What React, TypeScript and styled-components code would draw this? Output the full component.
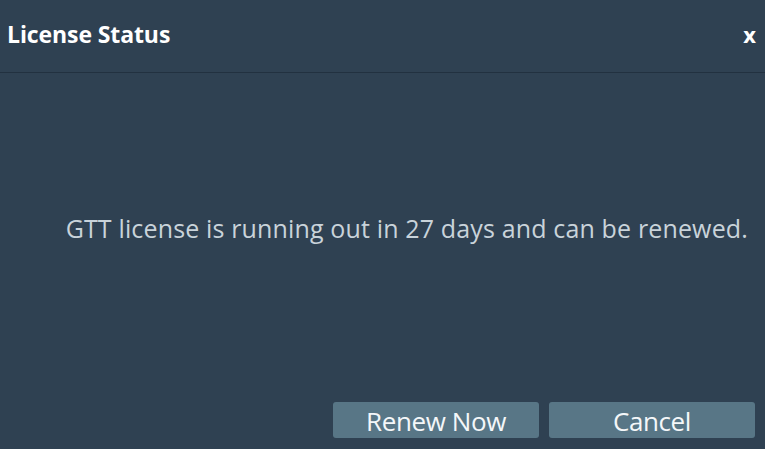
import React from 'react';
import styled, { createGlobalStyle } from 'styled-components';

const colors = {
  background: '#2f4152',
  divider: '#223140',
  title: '#ffffff',
  message: '#c9d3da',
  button: '#587686',
  buttonText: '#f4f7f9',
};

const GlobalStyle = createGlobalStyle`
  html, body {
    margin: 0;
    padding: 0;
    background: ${colors.background};
  }
  #root {
    height: 449px;
  }
`;

const Dialog = styled.div({
  display: 'flex',
  flexDirection: 'column',
  height: '449px',
  backgroundColor: colors.background,
  fontFamily: '"Open Sans", "Noto Sans", sans-serif',
  overflow: 'hidden',
});

const Header = styled.div({
  display: 'flex',
  alignItems: 'center',
  justifyContent: 'space-between',
  height: '73px',
  boxSizing: 'border-box',
  padding: '0 9px 4px 7px',
  borderBottom: `1px solid ${colors.divider}`,
  flexShrink: 0,
});

const Title = styled.span({
  fontSize: '23px',
  fontWeight: 700,
  color: colors.title,
  letterSpacing: '-0.1px',
});

const CloseButton = styled.button({
  padding: 0,
  border: 'none',
  backgroundColor: 'transparent',
  fontFamily: 'inherit',
  fontSize: '22px',
  fontWeight: 700,
  color: colors.title,
  cursor: 'default',
});

const Body = styled.div({
  flex: 1,
  display: 'flex',
  alignItems: 'center',
  justifyContent: 'flex-end',
  padding: '0 17px 20px 0',
});

const Message = styled.p({
  margin: 0,
  fontSize: '25px',
  letterSpacing: '0.15px',
  color: colors.message,
});

const Footer = styled.div({
  display: 'flex',
  justifyContent: 'flex-end',
  gap: '10px',
  padding: '0 10px 11px 0',
});

const ActionButton = styled.button({
  width: '206px',
  height: '36px',
  boxSizing: 'border-box',
  padding: '3px 0 0',
  border: 'none',
  borderRadius: '3px',
  backgroundColor: colors.button,
  fontFamily: 'inherit',
  fontSize: '26px',
  lineHeight: '33px',
  letterSpacing: '-0.4px',
  color: colors.buttonText,
  cursor: 'default',
});

export default function App() {
  return (
    <>
      <GlobalStyle />
      <Dialog>
        <Header>
          <Title>License Status</Title>
          <CloseButton>x</CloseButton>
        </Header>
        <Body>
          <Message>GTT license is running out in 27 days and can be renewed.</Message>
        </Body>
        <Footer>
          <ActionButton>Renew Now</ActionButton>
          <ActionButton>Cancel</ActionButton>
        </Footer>
      </Dialog>
    </>
  );
}
